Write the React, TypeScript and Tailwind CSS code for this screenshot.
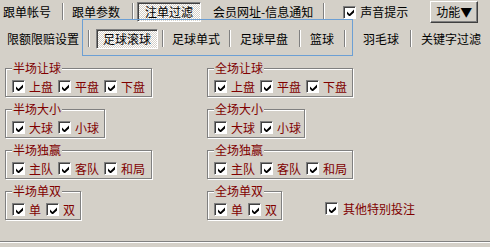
import type { ReactNode } from "react";

const FONT = "font-['Noto_Sans_CJK_SC','Noto_Sans',sans-serif]";

function Check() {
  return (
    <span className="flex h-[13px] w-[13px] shrink-0 items-center justify-center border border-b-white border-l-[#808080] border-r-white border-t-[#808080] bg-white shadow-[inset_1px_1px_0_#404040]">
      <svg width="7" height="7" viewBox="0 0 7 7" className="ml-px mt-px">
        <path d="M0 2.5 L2.5 5 L7 0.5 L7 3.5 L2.5 7.5 L0 5 Z" fill="#000" />
      </svg>
    </span>
  );
}

function Sep({ h = "h-[18px]" }: { h?: string }) {
  return <span className={`w-[2px] shrink-0 border-l border-r border-l-[#808080] border-r-white ${h}`} />;
}

function Sunken({ children, w }: { children: ReactNode; w: string }) {
  return (
    <span
      className={`flex h-[20px] shrink-0 items-center justify-center border border-b-white border-l-[#808080] border-r-white border-t-[#808080] bg-[repeating-conic-gradient(#ffffff_0_25%,#d4d0c8_0_50%)] bg-[length:2px_2px] shadow-[inset_1px_1px_0_#404040] ${w}`}
    >
      {children}
    </span>
  );
}

function Group({ title, items, w }: { title: string; items: string[]; w: string }) {
  return (
    <div
      className={`relative h-[29px] border border-[#808080] shadow-[inset_1px_1px_0_#fff,1px_1px_0_#fff] ${w}`}
    >
      <span className="absolute -top-[7px] left-[6px] bg-[#d4d0c8] px-px text-[12px] leading-[12px] text-[#800000]">
        {title}
      </span>
      <div className="flex items-center gap-[5px] pl-[6px] pt-[11px]">
        {items.map((it) => (
          <label key={it} className="flex items-center gap-[4px] text-[12px] leading-[13px] text-[#800000]">
            <Check />
            {it}
          </label>
        ))}
      </div>
    </div>
  );
}

const LEFT = [
  { title: "半场让球", items: ["上盘", "平盘", "下盘"], w: "w-[147px]" },
  { title: "半场大小", items: ["大球", "小球"], w: "w-[100px]" },
  { title: "半场独赢", items: ["主队", "客队", "和局"], w: "w-[147px]" },
];

const RIGHT = [
  { title: "全场让球", items: ["上盘", "平盘", "下盘"], w: "w-[146px]" },
  { title: "全场大小", items: ["大球", "小球"], w: "w-[98px]" },
  { title: "全场独赢", items: ["主队", "客队", "和局"], w: "w-[146px]" },
];

export default function App() {
  return (
    <div className={`relative h-[247px] w-[490px] overflow-hidden bg-[#d4d0c8] text-[12px] leading-[12px] text-black ${FONT}`}>
      {/* top tabs */}
      <div className="flex h-[24px] items-center pl-[3px]">
        <span>跟单帐号</span>
        <span className="ml-[11px]"><Sep /></span>
        <span className="ml-[8px]">跟单参数</span>
        <span className="ml-[12px]"><Sep /></span>
        <span className="ml-[3px]">
          <Sunken w="w-[64px]">注单过滤</Sunken>
        </span>
        <span className="ml-[12px]">会员网址-信息通知</span>
        <span className="ml-[10px]"><Sep /></span>
        <span className="ml-[18px]"><Check /></span>
        <span className="ml-[4px]">声音提示</span>
        <button className="ml-[22px] flex h-[22px] w-[48px] items-center justify-center border border-b-[#404040] border-l-white border-r-[#404040] border-t-white shadow-[inset_-1px_-1px_0_#808080]">
          功能▼
        </button>
      </div>

      {/* sub tabs */}
      <div className="flex h-[30px] items-center pl-[7px]">
        <span>限额限赔设置</span>
        <span className="ml-[9px]"><Sep /></span>
        <span className="ml-[6px]">
          <Sunken w="w-[62px]">足球滚球</Sunken>
        </span>
        <span className="ml-[4px]"><Sep /></span>
        <span className="ml-[8px]">足球单式</span>
        <span className="ml-[9px]"><Sep /></span>
        <span className="ml-[9px]">足球早盘</span>
        <span className="ml-[11px]"><Sep /></span>
        <span className="ml-[9px]">篮球</span>
        <span className="ml-[10px]"><Sep /></span>
        <span className="ml-[17px]">羽毛球</span>
        <span className="ml-[11px]"><Sep /></span>
        <span className="ml-[9px]">关键字过滤</span>
      </div>

      {/* focus frame */}
      <div className="pointer-events-none absolute left-[82px] top-[19px] h-[37px] w-[271px] border border-[#6c9fd4]" />

      {/* groups */}
      <div className="mt-[14px] flex pl-[5px]">
        <div className="flex w-[202px] flex-col gap-[12px]">
          {LEFT.map((g) => (
            <Group key={g.title} {...g} />
          ))}
          <Group title="半场单双" items={["单", "双"]} w="w-[76px]" />
        </div>
        <div className="flex flex-col gap-[12px]">
          {RIGHT.map((g) => (
            <Group key={g.title} {...g} />
          ))}
          <div className="flex items-start">
            <Group title="全场单双" items={["单", "双"]} w="w-[75px]" />
            <label className="ml-[43px] mt-[11px] flex items-center gap-[5px] text-[#800000]">
              <Check />
              其他特别投注
            </label>
          </div>
        </div>
      </div>

      {/* bottom rule */}
      <div className="mt-[21px] h-[2px] border-b border-t border-b-white border-t-[#808080]" />
    </div>
  );
}
